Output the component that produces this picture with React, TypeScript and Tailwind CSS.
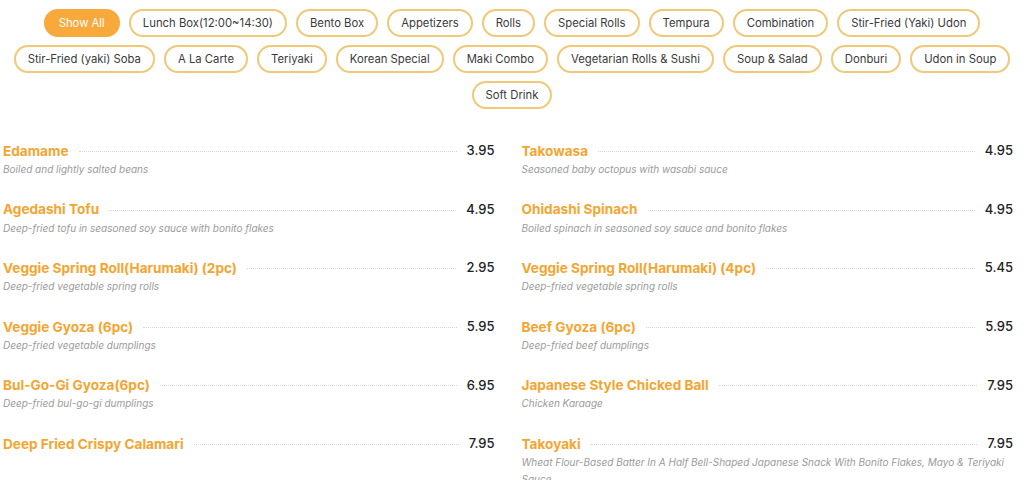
import React from 'react';

const categories = [
  'Show All',
  'Lunch Box(12:00~14:30)',
  'Bento Box',
  'Appetizers',
  'Rolls',
  'Special Rolls',
  'Tempura',
  'Combination',
  'Stir-Fried (Yaki) Udon',
  'Stir-Fried (yaki) Soba',
  'A La Carte',
  'Teriyaki',
  'Korean Special',
  'Maki Combo',
  'Vegetarian Rolls & Sushi',
  'Soup & Salad',
  'Donburi',
  'Udon in Soup',
  'Soft Drink',
];

type Item = { name: string; desc: string; price: string };

const items: Item[] = [
  { name: 'Edamame', desc: 'Boiled and lightly salted beans', price: '3.95' },
  { name: 'Takowasa', desc: 'Seasoned baby octopus with wasabi sauce', price: '4.95' },
  { name: 'Agedashi Tofu', desc: 'Deep-fried tofu in seasoned soy sauce with bonito flakes', price: '4.95' },
  { name: 'Ohidashi Spinach', desc: 'Boiled spinach in seasoned soy sauce and bonito flakes', price: '4.95' },
  { name: 'Veggie Spring Roll(Harumaki) (2pc)', desc: 'Deep-fried vegetable spring rolls', price: '2.95' },
  { name: 'Veggie Spring Roll(Harumaki) (4pc)', desc: 'Deep-fried vegetable spring rolls', price: '5.45' },
  { name: 'Veggie Gyoza (6pc)', desc: 'Deep-fried vegetable dumplings', price: '5.95' },
  { name: 'Beef Gyoza (6pc)', desc: 'Deep-fried beef dumplings', price: '5.95' },
  { name: 'Bul-Go-Gi Gyoza(6pc)', desc: 'Deep-fried bul-go-gi dumplings', price: '6.95' },
  { name: 'Japanese Style Chicked Ball', desc: 'Chicken Karaage', price: '7.95' },
  { name: 'Deep Fried Crispy Calamari', desc: '', price: '7.95' },
  {
    name: 'Takoyaki',
    desc: 'Wheat Flour-Based Batter In A Half Bell-Shaped Japanese Snack With Bonito Flakes, Mayo & Teriyaki Sauce',
    price: '7.95',
  },
];

const MenuItem = ({ item }: { item: Item }) => (
  <div>
    <div className="flex items-center h-5">
      <span className="text-[13.6px] font-bold text-[#f4a531] whitespace-nowrap">{item.name}</span>
      <span className="flex-1 mx-[10px] border-b border-dotted border-[#d6d6d6] h-0 mt-[1px]" />
      <span className="text-[13px] font-medium text-[#222]">{item.price}</span>
    </div>
    {item.desc && (
      <p className="text-[10px] italic text-[#9a9a9a] leading-[17px] pr-2">{item.desc}</p>
    )}
  </div>
);

export default function App() {
  return (
    <div className="w-[1024px] h-[480px] overflow-hidden bg-white font-['Inter',sans-serif]">
      <div className="flex flex-wrap justify-center gap-x-[9px] gap-y-2 pt-[9px] px-1">
        {categories.map((c, i) => (
          <button
            key={c}
            className={
              i === 0
                ? 'h-7 px-[13px] rounded-full bg-[#f8a93b] border-2 border-[#f8a93b] text-white text-[11.3px]'
                : 'h-7 px-[12px] rounded-full bg-white border-2 border-[#f1c878] text-[#3a3a3a] text-[11.3px]'
            }
          >
            {c}
          </button>
        ))}
      </div>
      <div className="grid grid-cols-2 gap-x-[27px] gap-y-[21.6px] mt-8 pl-[3px] pr-[11px]">
        {items.map((it) => (
          <MenuItem key={it.name} item={it} />
        ))}
      </div>
    </div>
  );
}
